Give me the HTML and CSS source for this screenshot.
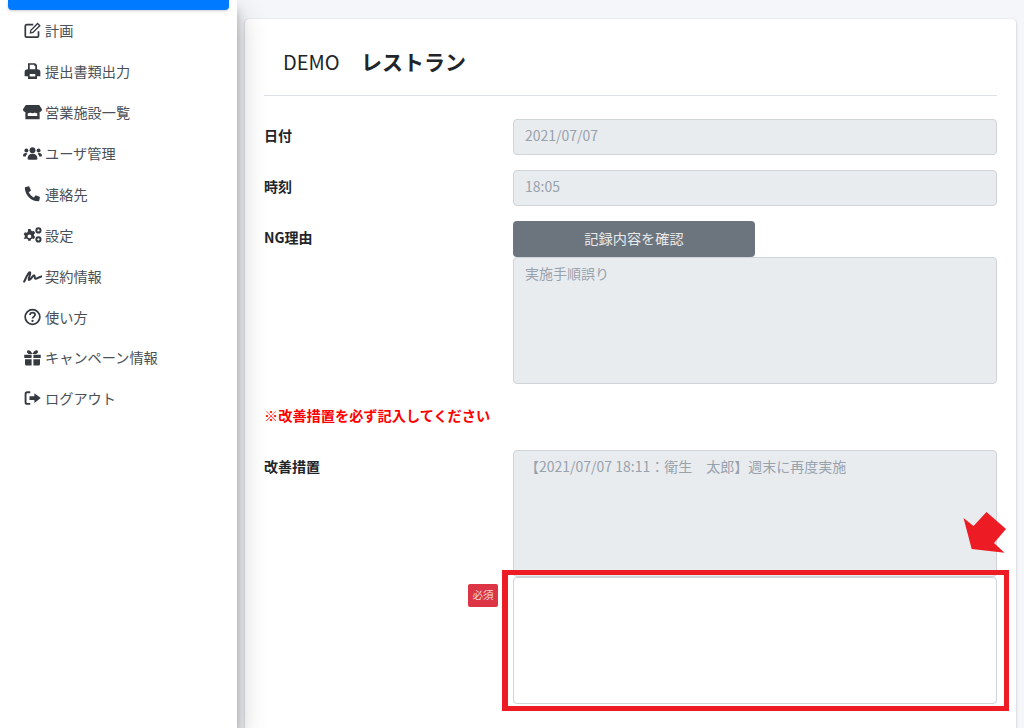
FILE: index.html
```html
<!DOCTYPE html>
<html lang="ja">
<head>
<meta charset="utf-8">
<title>改善措置</title>
<link rel="stylesheet" href="styles.css">
</head>
<body>
<div class="app">
  <aside class="sidebar">
    <div class="active-item"></div>
    <nav class="nav">
      <a class="nav-link"><svg class="icon" viewBox="0 0 24 24"><path class="ol" d="M20 13.500V20a1.600 1.600 0 0 1-1.600 1.600H4A1.600 1.600 0 0 1 2.400 20V6.500A1.600 1.600 0 0 1 4 4.900h9"/><path d="M9 12l-.9 5 5-.9L23 6.300 18.800 2.100zM10.700 12.800l8.100-8.100 1.600 1.600-8.100 8.100-2.200.5z" fill-rule="evenodd"/></svg>計画</a>
      <a class="nav-link"><svg class="icon" viewBox="0 0 24 24"><path fill-rule="evenodd" d="M6 1.500h9.500L18 4v5.500c2.500 0 4.500 1 4.500 3.500v6H18v3.500H6V19H1.500v-6c0-2.500 2-3.500 4.500-3.500zM8.300 3.800v6h7.400V5h-1.500V3.800zM8.300 16v3.300h7.400V16z"/></svg>提出書類出力</a>
      <a class="nav-link"><svg class="icon wide" viewBox="0 0 24 20"><path fill-rule="evenodd" d="M3.500 1h17L24 6.500c0 2.300-1.500 3.500-3 3.500v9H3v-9C1.500 10 0 8.800 0 6.500zM6 11.500V15h12v-3.500c-1 .3-2.200 0-3-.9-1.500 1.300-4.500 1.300-6 0-.8.900-2 1.200-3 .9z"/></svg>営業施設一覧</a>
      <a class="nav-link"><svg class="icon wide" viewBox="0 0 24 20"><circle cx="12" cy="6.500" r="3.700"/><circle cx="4.300" cy="6.800" r="2.500"/><circle cx="19.700" cy="6.800" r="2.500"/><path d="M5.800 17c0-4 2.500-6 6.200-6s6.200 2 6.200 6c0 1-.7 1.500-1.500 1.500H7.300c-.8 0-1.500-.5-1.500-1.500zM0 13.500c0-2 1.300-3.500 3.300-3.500 1 0 1.700.3 2.300.8-1.200 1-1.800 2.300-2 3.700H1c-.6 0-1-.4-1-1zM24 13.500c0-2-1.300-3.500-3.300-3.500-1 0-1.700.3-2.300.8 1.200 1 1.800 2.300 2 3.700H23c.6 0 1-.4 1-1z"/></svg>ユーザ管理</a>
      <a class="nav-link"><svg class="icon" viewBox="0 0 24 24"><path d="M3 2.500l4.500-1 2.500 5.800-3 2.500c1.400 3 3.800 5.400 6.800 6.800l2.500-3 5.700 2.400-1 4.500c-.1.700-.7 1.200-1.400 1.200C10.100 21.500 2 13.400 1.800 3.900c0-.7.500-1.300 1.200-1.400z"/></svg>連絡先</a>
      <a class="nav-link"><svg class="icon wide" viewBox="0 0 24 20"><path fill-rule="evenodd" d="M6.500 2.500h3.200l.4 1.900 1.800 1 1.900-.6 1.600 2.800-1.500 1.300v2l1.500 1.300-1.600 2.800-1.900-.6-1.800 1-.4 1.900H6.500l-.4-1.900-1.800-1-1.900.6L.8 14l1.500-1.300v-2L.8 9.400l1.600-2.800 1.900.6 1.800-1zM8.100 9.300a2.400 2.400 0 1 0 0 4.800 2.400 2.400 0 0 0 0-4.800z"/><path fill-rule="evenodd" d="M19.500.3a3.900 3.900 0 1 0 0 7.800 3.900 3.900 0 0 0 0-7.800zm0 2.500a1.400 1.400 0 1 1 0 2.800 1.400 1.400 0 0 1 0-2.800zM19.500 11.700a3.900 3.900 0 1 0 0 7.800 3.900 3.900 0 0 0 0-7.800zm0 2.500a1.400 1.400 0 1 1 0 2.800 1.400 1.400 0 0 1 0-2.800z"/></svg>設定</a>
      <a class="nav-link"><svg class="icon wide" viewBox="0 0 24 20"><path class="sig" d="M1.500 17C4 12 7 4.500 9 5.500c1.500.7-3 8.500-1.500 9.500 2 1 4.500-6 6.500-6 1.500 0 0 4.500 2 4.500 2 0 4-2.500 7.500-3"/></svg>契約情報</a>
      <a class="nav-link"><svg class="icon" viewBox="0 0 24 24"><circle class="ol" cx="12" cy="12" r="9.800"/><path class="ol" d="M8.600 9.300c.2-1.900 1.600-3 3.500-3 2 0 3.400 1.100 3.400 2.800 0 2.600-3.500 2.400-3.500 5"/><circle cx="12" cy="17.300" r="1.500"/></svg>使い方</a>
      <a class="nav-link"><svg class="icon" viewBox="0 0 24 24"><path d="M2 13.500h8.800V22H4a2 2 0 0 1-2-2zM13.200 13.500H22V20a2 2 0 0 1-2 2h-6.800zM1 7.500h9.800v4.500H1zM13.200 7.500H23V12h-9.800zM12 6.500C10 3 8 1.500 6.300 1.800 4 2.200 4 6 7 6.500zM12 6.500c2-3.500 4-5 5.700-4.700 2.300.4 2.300 4.200-.7 4.700z"/></svg>キャンペーン情報</a>
      <a class="nav-link"><svg class="icon" viewBox="0 0 24 24"><path d="M14.500 5.500v4H8v5h6.500v4L23 12zM9 3H5a3.500 3.500 0 0 0-3.500 3.500v11A3.500 3.500 0 0 0 5 21h4v-2.500H5A1 1 0 0 1 4 17.500v-11a1 1 0 0 1 1-1h4z"/></svg>ログアウト</a>
    </nav>
  </aside>

  <main class="content">
    <section class="card">
      <h1 class="title"><span class="store-code">DEMO</span><strong class="store-name">レストラン</strong></h1>
      <div class="form">
        <div class="row">
          <label class="label">日付</label>
          <div class="field"><div class="control readonly">2021/07/07</div></div>
        </div>
        <div class="row">
          <label class="label">時刻</label>
          <div class="field"><div class="control readonly">18:05</div></div>
        </div>
        <div class="row">
          <label class="label">NG理由</label>
          <div class="field">
            <button class="btn" type="button">記録内容を確認</button>
            <div class="control area readonly">実施手順誤り</div>
          </div>
        </div>
        <p class="notice">※改善措置を必ず記入してください</p>
        <div class="row tight">
          <label class="label">改善措置</label>
          <div class="field"><div class="control area readonly">【2021/07/07 18:11：衛生　太郎】週末に再度実施</div></div>
        </div>
        <div class="row tight">
          <div class="label-end"><span class="badge">必須</span></div>
          <div class="field"><div class="control area editable"></div></div>
        </div>
      </div>
    </section>
  </main>

  <div class="callout"></div>
  <svg class="arrow" viewBox="0 0 44 42"><polygon points="0.500,6 10.500,14 23.500,0 43,17 31,31 41.500,40.700 8.700,37"/></svg>
</div>
</body>
</html>
```
FILE: styles.css
```css
* { box-sizing: border-box; }

html, body { margin: 0; height: 100%; }

body {
  font-family: "Noto Sans CJK JP", "Noto Sans", sans-serif;
  font-size: 14px;
  color: #212529;
  background: #f4f6f9;
  overflow: hidden;
}

.app {
  position: relative;
  display: flex;
  height: 728px;
  overflow: hidden;
}

.sidebar {
  flex: 0 0 237px;
  background: #fff;
  box-shadow: 0 14px 28px rgba(0, 0, 0, .25), 0 10px 10px rgba(0, 0, 0, .22);
  position: relative;
  z-index: 2;
}

.active-item {
  height: 10px;
  margin: 0 8px;
  background: #007bff;
  border-radius: 0 0 4px 4px;
  box-shadow: 0 1px 3px rgba(0, 0, 0, .2);
}

.nav { display: flex; flex-direction: column; }

.nav-link {
  display: flex;
  align-items: center;
  height: 40.900px;
  padding-left: 23px;
  color: #495057;
  font-size: 14.200px;
  line-height: 1;
}

.icon {
  flex: none;
  width: 19px;
  height: 18px;
  margin-right: 3px;
  fill: #343a40;
}

.icon.wide { height: 16px; }

.icon .ol {
  fill: none;
  stroke: #343a40;
  stroke-width: 2.300;
}

.icon .sig {
  fill: none;
  stroke: #343a40;
  stroke-width: 2.600;
  stroke-linecap: round;
  stroke-linejoin: round;
}

.content {
  flex: 1;
  min-width: 0;
  padding: 19px 8px 0;
}

.card {
  background: #fff;
  border-radius: 4px;
  box-shadow: 0 0 1px rgba(0, 0, 0, .125), 0 1px 3px rgba(0, 0, 0, .2);
  padding: 0 19px;
  height: 760px;
}

.title {
  margin: 0 0 23px;
  height: 77px;
  padding: 26px 0 0 19px;
  border-bottom: 1px solid #dee2e6;
  font-size: 20px;
  font-weight: 400;
  line-height: 32px;
  display: flex;
}

.store-code { width: 78px; padding-top: 1px; }

.store-name { font-size: 21px; font-weight: 700; }

.row {
  display: grid;
  grid-template-columns: 249px 484px;
  margin-bottom: 15px;
}

.row.tight { margin-bottom: 0; }

.label {
  font-size: 14px;
  font-weight: 700;
  line-height: 18px;
  padding-top: 7px;
}

.label-end {
  display: flex;
  justify-content: flex-end;
  align-items: flex-start;
  padding: 7px 15px 0 0;
}

.badge {
  width: 30px;
  height: 23px;
  background: #dc3545;
  border-radius: 2px;
  color: #f5d5d8;
  font-size: 10.500px;
  line-height: 21px;
  text-align: center;
}

.control {
  height: 36px;
  border: 1px solid #ced4da;
  border-radius: 4px;
  padding: 0 11px;
  font-size: 14px;
  line-height: 31px;
  color: #98a2ad;
}

.readonly { background: #e9ecef; }

.area {
  height: 127px;
  line-height: 20px;
  padding-top: 5px;
}

.editable { background: #fff; }

.btn {
  display: block;
  width: 242px;
  height: 36px;
  padding: 0 0 3px;
  border: 0;
  border-radius: 4px;
  background: #6c757d;
  color: #e6e8ea;
  font: inherit;
  font-size: 14.200px;
  text-align: center;
}

.notice {
  margin: 0;
  height: 51px;
  padding-top: 7px;
  font-size: 14.200px;
  font-weight: 700;
  line-height: 18px;
  color: #f00;
}

.callout {
  position: absolute;
  left: 502px;
  top: 570px;
  width: 507px;
  height: 141px;
  border: 5px solid #ed1c24;
  border-left-width: 6px;
  z-index: 3;
}

.arrow {
  position: absolute;
  left: 963px;
  top: 512px;
  width: 44px;
  height: 42px;
  fill: #ed1c24;
  z-index: 3;
}
```
